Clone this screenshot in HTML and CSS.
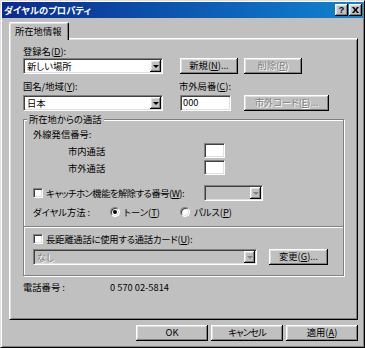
FILE: index.html
```html
<!DOCTYPE html>
<html>
<head>
	<meta charset="utf-8">
	<title>ダイヤルのプロパティ</title>
	<link rel="stylesheet" href="styles.css">
</head>
<body>
	<div class="window">
		<div class="titlebar">
			<span class="title">ダイヤルのプロパティ</span>
			<div class="caps">
				<span class="cap">?</span>
				<span class="cap">
					<svg width="7" height="6" viewBox="0 0 7 6"><path d="M0 0h2l1.5 2 1.5-2h2l-2.5 3 2.5 3h-2l-1.5-2-1.5 2h-2l2.5-3z" fill="#000"/></svg>
				</span>
			</div>
		</div>

		<div class="body">
			<div class="tabs"><div class="tab">所在地情報</div></div>

			<div class="panel">
				<div class="lbl">登録名(<u>D</u>):</div>
				<div class="row r1">
					<div class="combo w140"><span class="val">新しい場所</span><span class="arrow"></span></div>
					<div class="btn w58 ml17">新規(<u>N</u>)...</div>
					<div class="btn w58 ml6 off">削除(<u>R</u>)</div>
				</div>

				<div class="lbl r2l">
					<span class="col1">国名/地域(<u>Y</u>):</span>
					<span>市外局番(<u>C</u>):</span>
				</div>
				<div class="row r2">
					<div class="combo w140"><span class="val">日本</span><span class="arrow"></span></div>
					<div class="field w51 ml17">000</div>
					<div class="btn w85 ml13 off">市外コード(<u>E</u>)...</div>
				</div>

				<!-- 所在地からの通話 -->
				<div class="group g1">
					<span class="legend">所在地からの通話</span>
					<div class="lbl">外線発信番号:</div>
					<div class="drow">
						<span class="dlbl">市内通話</span>
						<div class="field w21"></div>
					</div>
					<div class="drow d2">
						<span class="dlbl">市外通話</span>
						<div class="field w21"></div>
					</div>
					<div class="crow">
						<span class="chk"></span>
						<span class="clbl">キャッチホン機能を解除する番号(<u>W</u>):</span>
						<div class="combo w59 dis"><span class="val"></span><span class="arrow"></span></div>
					</div>
					<div class="dial">
						<span class="dial-lbl">ダイヤル方法 :</span>
						<span class="opt"><span class="radio on"></span>トーン(<u>T</u>)</span>
						<span class="opt"><span class="radio"></span>パルス(<u>P</u>)</span>
					</div>
				</div>

				<div class="group g2">
					<div class="crow first">
						<span class="chk"></span>
						<span class="tight">長距離通話に使用する通話カード(<u>U</u>):</span>
					</div>
					<div class="row card">
						<div class="combo w224 dis"><span class="val off">なし</span><span class="arrow"></span></div>
						<div class="btn w59 ml12">変更(<u>G</u>)...</div>
					</div>
				</div>

				<div class="phone">
					<span class="ph-lbl">電話番号 :</span>
					<span>0 570 02-5814</span>
				</div>
			</div>

			<div class="actions">
				<div class="btn w72">OK</div>
				<div class="btn w72 kana">キャンセル</div>
				<div class="btn w72">適用(<u>A</u>)</div>
			</div>
		</div>
	</div>
</body>
</html>
```

FILE: styles.css
```css
* { margin: 0; padding: 0; box-sizing: border-box; }
body { width: 365px; height: 348px; background: #c0c0c0; color: #000;
  font-family: "Noto Sans CJK JP", "Liberation Sans", sans-serif; font-size: 9.3px;
  font-feature-settings: "palt"; }
u { text-decoration: underline; text-underline-offset: 1px; }

/* window frame */
.window { width: 365px; height: 348px; background: #c0c0c0; padding: 1px;
  border: 1px solid; border-color: #dfdfdf #000 #000 #dfdfdf;
  box-shadow: inset 1px 1px #fff, inset -1px -1px #808080; }

.titlebar { height: 16px; display: flex; align-items: center; justify-content: space-between;
  padding: 0 1px 0 2px; background: linear-gradient(to right, #0a2a8e, #1084d0); }
.title { color: #fff; font-weight: bold; font-size: 9.3px; }
.caps { display: flex; gap: 1px; }
.cap { width: 13px; height: 12px; display: flex; align-items: center; justify-content: center;
  background: #c0c0c0; font-weight: bold; font-size: 9px; line-height: 1;
  font-family: "Liberation Sans", sans-serif;
  box-shadow: inset -1px -1px #000, inset 1px 1px #fff, inset -2px -2px #808080, inset 2px 2px #dfdfdf; }

.body { padding: 4px 5px 0 7px; }

/* tab */
.tabs { height: 16px; display: flex; }
.tab { width: 60px; height: 18px; margin-bottom: -2px; position: relative; z-index: 1;
  background: #c0c0c0; padding: 2px 0 0 5px; line-height: 12px;
  border: 1px solid; border-bottom: 0; border-color: #fff #000 #000 #fff;
  border-radius: 2px 2px 0 0; box-shadow: inset -1px 0 #808080, inset 1px 1px #dfdfdf; }

.panel { height: 282px; padding: 7px 0 0 13px;
  border: 1px solid; border-color: #fff #000 #000 #fff;
  box-shadow: inset 1px 1px #dfdfdf, inset -1px -1px #808080; }

.lbl { height: 11px; line-height: 11px; white-space: nowrap; }
.row { display: flex; height: 16px; }
.r1 { margin-top: 1px; }
.r2l { margin-top: 7px; display: flex; }
.col1 { width: 156px; }
.r2 { margin-top: 3px; }

/* widths */
.w21 { width: 21px; } .w51 { width: 51px; } .w58 { width: 58px; } .w59 { width: 59px; }
.w72 { width: 72px; } .w85 { width: 85px; } .w140 { width: 140px; } .w224 { width: 224px; }
.ml6 { margin-left: 6px; } .ml12 { margin-left: 12px; } .ml13 { margin-left: 13px; } .ml17 { margin-left: 17px; }

/* controls */
.btn { height: 16px; display: flex; align-items: center; justify-content: center; white-space: nowrap;
  background: #c0c0c0; line-height: 1;
  box-shadow: inset -1px -1px #000, inset 1px 1px #fff, inset -2px -2px #808080, inset 2px 2px #dfdfdf; }
.btn.kana { letter-spacing: -1px; }
.off { color: #808080; text-shadow: 1px 1px 0 #fff; }

.field, .combo { height: 16px; background: #fff; border: 1px solid; border-color: #808080 #fff #fff #808080;
  box-shadow: inset 1px 1px #404040, inset -1px -1px #dfdfdf; }
.field { padding-left: 2px; line-height: 13px; }
.combo { display: flex; align-items: center; padding: 1px; }
.combo .val { flex: 1; padding-left: 2px; line-height: 12px; white-space: nowrap; }
.combo.dis { background: #c0c0c0; }
.arrow { width: 11px; height: 12px; display: flex; align-items: center; justify-content: center;
  background: #c0c0c0;
  box-shadow: inset -1px -1px #000, inset 1px 1px #fff, inset -2px -2px #808080, inset 2px 2px #dfdfdf; }
.arrow::before { content: ""; border-style: solid; border-width: 3px 3px 0; border-color: #000 transparent transparent; }
.dis .arrow::before { border-top-color: #808080; }

.chk, .radio { width: 10px; height: 10px; flex: none; background: #fff;
  border: 1px solid; border-color: #808080 #fff #fff #808080;
  box-shadow: inset 1px 1px #404040, inset -1px -1px #dfdfdf; }
.radio { border-radius: 50%; display: flex; align-items: center; justify-content: center; margin-right: 4px; }
.radio.on::after { content: ""; width: 4px; height: 4px; border-radius: 50%; background: #000; }

/* group boxes */
.group { width: 321px; position: relative; border: 1px solid #808080;
  box-shadow: inset 1px 1px #fff, 1px 1px #fff; }
.legend { position: absolute; left: 3px; top: -6px; padding: 0 2px; background: #c0c0c0;
  line-height: 11px; white-space: nowrap; }
.g1 { margin-top: 8px; padding: 9px 0 8px 9px; }
.g2 { margin-top: -1px; padding: 6px 0 10px 9px; }

.drow { display: flex; align-items: center; height: 15px; margin-top: 3px; }
.drow.d2 { margin-top: 2px; }
.drow .field { height: 15px; }
.dlbl { margin-left: 35px; width: 136px; }

.crow { display: flex; align-items: center; height: 16px; margin-top: 10px; white-space: nowrap; }
.crow .chk { margin-right: 3px; }
.clbl { width: 158px; letter-spacing: -0.5px; }
.tight { letter-spacing: -0.2px; }
.crow.first { margin-top: 0; height: 12px; }

.dial { display: flex; align-items: center; height: 12px; margin-top: 5px; white-space: nowrap; }
.dial-lbl { width: 77px; }
.opt { display: flex; align-items: center; width: 70px; }

.card { margin-top: 4px; }

.phone { display: flex; margin-top: 6px; line-height: 11px; }
.ph-lbl { width: 87px; }

.actions { display: flex; justify-content: flex-end; gap: 3px; margin-top: 5px; }
```
